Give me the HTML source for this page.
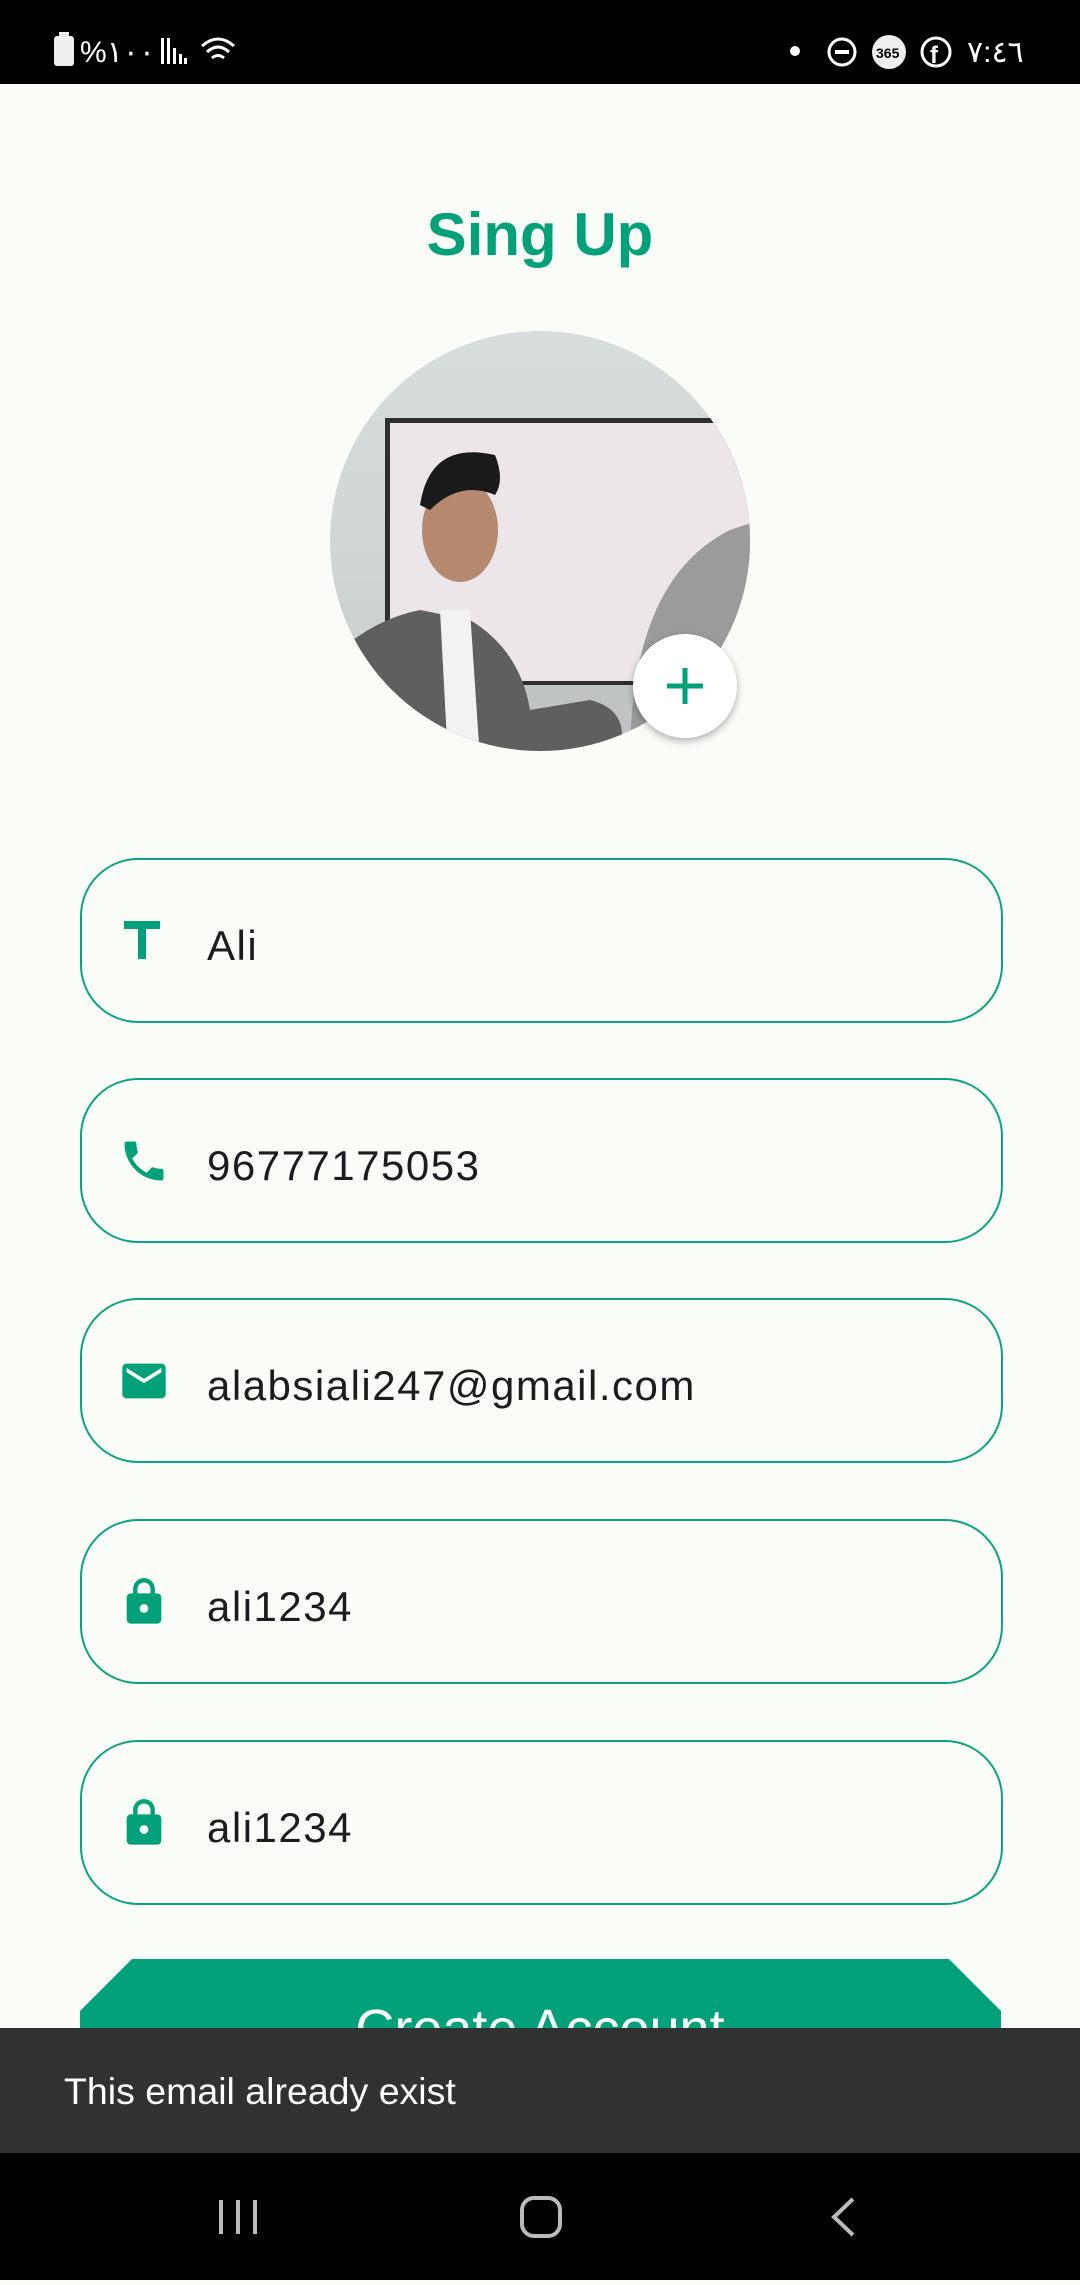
<!DOCTYPE html>
<html><head><meta charset="utf-8"><style>
*{margin:0;padding:0;box-sizing:border-box}
body{width:1080px;height:2280px;background:#fafcf8;position:relative;overflow:hidden;font-family:"Liberation Sans",sans-serif}
.sb{position:absolute;left:0;top:0;width:1080px;height:84px;background:#000;color:#fff}
.title{position:absolute;top:200px;left:0;width:1080px;text-align:center;font-size:60px;font-weight:bold;color:#00a078}
.field{position:absolute;left:80px;width:923px;height:165px;border:2.5px solid #0ba37f;border-radius:58px}
.field svg{position:absolute;left:36px;top:55px}
.field span{position:absolute;left:125px;top:62px;font-size:42px;color:#1c1c1c;letter-spacing:1.5px}
.snack{position:absolute;left:0;top:2028px;width:1080px;height:125px;background:#303131;color:#fff;font-size:37.5px;padding:42px 0 0 64px}
.nav{position:absolute;left:0;top:2153px;width:1080px;height:127px;background:#000}
</style></head><body>
<div class="sb">
<svg width="1080" height="84">
<rect x="54" y="36" width="20" height="30" rx="3" fill="#eee"/><rect x="59" y="32" width="10" height="5" fill="#eee"/>
<text x="80" y="62" fill="#fff" font-size="30" font-family="Liberation Sans">%١٠٠</text>
<g fill="#fff"><rect x="161" y="38" width="3" height="26"/><rect x="167" y="38" width="3" height="26"/><rect x="173" y="48" width="3" height="16"/><rect x="179" y="54" width="3" height="10"/><rect x="184" y="58" width="3" height="6"/></g>
<path d="M202 46 Q218 32 234 46 M207 52 Q218 42 229 52 M212 58 Q218 53 224 58" stroke="#fff" stroke-width="3" fill="none"/>
<circle cx="795" cy="51" r="5" fill="#fff"/>
<circle cx="842" cy="52" r="13" stroke="#fff" stroke-width="3" fill="none"/><rect x="835" y="50" width="14" height="4" fill="#fff"/>
<ellipse cx="889" cy="52" rx="17" ry="17" fill="#eee"/><text x="876" y="58" font-size="14" font-weight="bold" fill="#000">365</text>
<circle cx="936" cy="52" r="14" stroke="#fff" stroke-width="3" fill="none"/><text x="930" y="63" font-size="24" font-weight="bold" fill="#fff">f</text>
<text x="967" y="62" fill="#fff" font-size="30">٧:٤٦</text>
</svg></div>
<div class="title">Sing Up</div>
<svg style="position:absolute;left:330px;top:330px" width="430" height="430">
<defs><clipPath id="c"><circle cx="210" cy="211" r="210"/></clipPath>
<linearGradient id="g" x1="0" y1="0" x2="0" y2="1"><stop offset="0" stop-color="#d8dede"/><stop offset="1" stop-color="#c8cccc"/></linearGradient></defs>
<g clip-path="url(#c)">
<rect width="430" height="430" fill="url(#g)"/>
<rect x="55" y="88" width="375" height="270" fill="#2c2e30"/>
<rect x="60" y="93" width="370" height="258" fill="#ece6ea"/>
<rect x="0" y="355" width="430" height="80" fill="#bfc3c3"/>
<path d="M300 430 Q300 250 400 200 L430 190 L430 430Z" fill="#9b9b9b"/>
<path d="M0 330 Q40 290 90 280 L140 290 Q190 320 200 380 L260 370 Q300 380 290 420 L250 430 L0 430Z" fill="#5e6060"/>
<path d="M110 280 L140 280 L150 430 L118 430Z" fill="#f2f2f2"/>
<ellipse cx="130" cy="200" rx="38" ry="52" fill="#b58a70"/>
<path d="M90 175 Q100 110 165 125 Q175 150 165 165 Q130 150 100 180Z" fill="#1a1a1a"/>
</g></svg>
<div style="position:absolute;left:633px;top:634px;width:104px;height:104px;border-radius:50%;background:#fff;box-shadow:0 3px 8px rgba(0,0,0,.3)"></div>
<svg style="position:absolute;left:660px;top:661px" width="50" height="50"><path d="M25 7V43M7 25H43" stroke="#00a078" stroke-width="5"/></svg>

<div class="field" style="top:858px"><svg width="50" height="50" viewBox="0 0 50 50"><path d="M6 6H42V14H28V44H20V14H6Z" fill="#00a078"/></svg><span>Ali</span></div>
<div class="field" style="top:1078px"><svg width="52" height="52" viewBox="0 0 24 24"><path fill="#00a078" d="M6.6 10.8c1.4 2.8 3.8 5.1 6.6 6.6l2.2-2.2c.3-.3.7-.4 1-.2 1.1.4 2.300.6 3.600.6.6 0 1 .4 1 1V20c0 .6-.4 1-1 1C10.6 21 3 13.4 3 4c0-.6.4-1 1-1h3.5c.6 0 1 .4 1 1 0 1.3.2 2.5.6 3.6.1.3 0 .7-.2 1z"/></svg><span>96777175053</span></div>
<div class="field" style="top:1298px"><svg width="52" height="52" viewBox="0 0 24 24"><path fill="#00a078" d="M20 4H4c-1.1 0-2 .9-2 2v12c0 1.1.9 2 2 2h16c1.1 0 2-.9 2-2V6c0-1.1-.9-2-2-2zm0 4l-8 5-8-5V6l8 5 8-5v2z"/></svg><span>alabsiali247@gmail.com</span></div>
<div class="field" style="top:1519px"><svg width="52" height="52" viewBox="0 0 24 24"><path fill="#00a078" d="M18 8h-1V6c0-2.8-2.2-5-5-5S7 3.2 7 6v2H6c-1.1 0-2 .9-2 2v10c0 1.1.9 2 2 2h12c1.1 0 2-.9 2-2V10c0-1.1-.9-2-2-2zm-6 9c-1.1 0-2-.9-2-2s.9-2 2-2 2 .9 2 2-.9 2-2 2zM9 8V6c0-1.7 1.3-3 3-3s3 1.3 3 3v2H9z"/></svg><span>ali1234</span></div>
<div class="field" style="top:1740px"><svg width="52" height="52" viewBox="0 0 24 24"><path fill="#00a078" d="M18 8h-1V6c0-2.8-2.2-5-5-5S7 3.2 7 6v2H6c-1.1 0-2 .9-2 2v10c0 1.1.9 2 2 2h12c1.1 0 2-.9 2-2V10c0-1.1-.9-2-2-2zm-6 9c-1.1 0-2-.9-2-2s.9-2 2-2 2 .9 2 2-.9 2-2 2zM9 8V6c0-1.7 1.3-3 3-3s3 1.3 3 3v2H9z"/></svg><span>ali1234</span></div>

<svg style="position:absolute;left:0;top:1955px" width="1080" height="73">
<path d="M132 4H949L1001 56V80H80V56Z" fill="#00a078"/>
<text x="540" y="92" text-anchor="middle" fill="#fff" font-size="54" font-family="Liberation Sans">Create Account</text>
</svg>
<div class="snack">This email already exist</div>
<div class="nav"><svg width="1080" height="127">
<g fill="#bbb"><rect x="219" y="47" width="4" height="34"/><rect x="236" y="47" width="4" height="34"/><rect x="253" y="47" width="4" height="34"/></g>
<rect x="522" y="45" width="38" height="38" rx="12" stroke="#bbb" stroke-width="4" fill="none"/>
<path d="M853 46L834 64L853 82" stroke="#bbb" stroke-width="4" fill="none"/>
</svg></div>
</body></html>
